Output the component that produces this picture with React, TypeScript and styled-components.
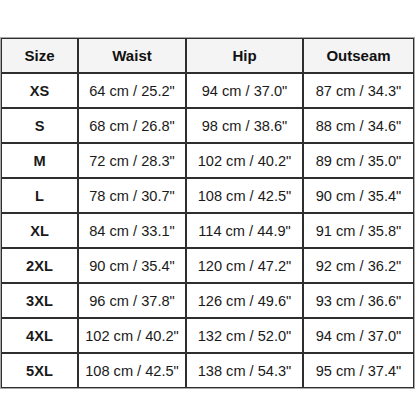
import React from "react";
import styled, { createGlobalStyle } from "styled-components";

const GlobalStyle = createGlobalStyle`
  html, body {
    margin: 0;
    padding: 0;
    background: #ffffff;
  }
  body {
    font-family: "Liberation Sans", Arial, sans-serif;
    color: #1a1a1a;
  }
`;

const Page = styled.div`
  width: 416px;
  height: 416px;
  padding-top: 37px;
  box-sizing: border-box;
  overflow: hidden;
`;

const Table = styled.table`
  border-collapse: separate;
  border-spacing: 0;
  border: 1px solid #a8a8a8;
  table-layout: fixed;
  width: 415px;
`;

const HeadCell = styled.th<{ $w: number }>`
  width: ${(p) => p.$w}px;
  height: 35px;
  box-sizing: border-box;
  border: 1px solid #2e2e2e;
  background: #f4f4f4;
  padding: 0;
  font-size: 15px;
  font-weight: 700;
  text-align: center;
  vertical-align: middle;
  color: #111;
`;

const Cell = styled.td<{ $bold?: boolean }>`
  height: 35px;
  box-sizing: border-box;
  border: 1px solid #2e2e2e;
  background: #ffffff;
  padding: 0;
  font-size: 14.6px;
  font-weight: ${(p) => (p.$bold ? 700 : 400)};
  text-align: center;
  vertical-align: middle;
  white-space: nowrap;
  color: #1a1a1a;
`;

const columns = [
  { label: "Size", width: 77 },
  { label: "Waist", width: 108 },
  { label: "Hip", width: 117 },
  { label: "Outseam", width: 111 },
];

const rows = [
  ["XS", '64 cm / 25.2"', '94 cm / 37.0"', '87 cm / 34.3"'],
  ["S", '68 cm / 26.8"', '98 cm / 38.6"', '88 cm / 34.6"'],
  ["M", '72 cm / 28.3"', '102 cm / 40.2"', '89 cm / 35.0"'],
  ["L", '78 cm / 30.7"', '108 cm / 42.5"', '90 cm / 35.4"'],
  ["XL", '84 cm / 33.1"', '114 cm / 44.9"', '91 cm / 35.8"'],
  ["2XL", '90 cm / 35.4"', '120 cm / 47.2"', '92 cm / 36.2"'],
  ["3XL", '96 cm / 37.8"', '126 cm / 49.6"', '93 cm / 36.6"'],
  ["4XL", '102 cm / 40.2"', '132 cm / 52.0"', '94 cm / 37.0"'],
  ["5XL", '108 cm / 42.5"', '138 cm / 54.3"', '95 cm / 37.4"'],
];

export default function App() {
  return (
    <Page>
      <GlobalStyle />
      <Table>
        <thead>
          <tr>
            {columns.map((c) => (
              <HeadCell key={c.label} $w={c.width}>
                {c.label}
              </HeadCell>
            ))}
          </tr>
        </thead>
        <tbody>
          {rows.map((r) => (
            <tr key={r[0]}>
              {r.map((v, i) => (
                <Cell key={i} $bold={i === 0}>
                  {v}
                </Cell>
              ))}
            </tr>
          ))}
        </tbody>
      </Table>
    </Page>
  );
}
